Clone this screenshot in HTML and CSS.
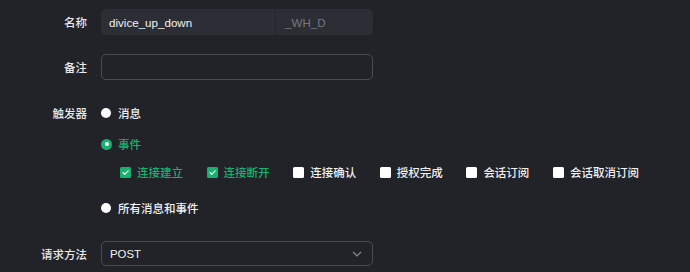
FILE: index.html
```html
<!DOCTYPE html>
<html lang="zh">
<head>
<meta charset="utf-8">
<link rel="stylesheet" href="styles.css">
</head>
<body>
<form class="form">
  <div class="row row-name">
    <label class="label">名称</label>
    <div class="input-group">
      <span class="input-main">divice_up_down</span>
      <span class="input-suffix">_WH_D</span>
    </div>
  </div>
  <div class="row row-remark">
    <label class="label">备注</label>
    <div class="input-outline"></div>
  </div>
  <div class="row row-trigger">
    <label class="label label-top">触发器</label>
    <div class="options">
      <div class="opt opt-1"><span class="radio"></span><span class="opt-text">消息</span></div>
      <div class="opt opt-2 active"><span class="radio checked"></span><span class="opt-text">事件</span></div>
      <div class="checks">
        <div class="check active"><span class="box checked"><svg viewBox="0 0 11 11" width="11" height="11"><path d="M3 5.6 L4.8 7.3 L8.1 3.8" fill="none" stroke="#fff" stroke-width="1.2" stroke-linecap="round" stroke-linejoin="round"/></svg></span><span>连接建立</span></div>
        <div class="check active"><span class="box checked"><svg viewBox="0 0 11 11" width="11" height="11"><path d="M3 5.6 L4.8 7.3 L8.1 3.8" fill="none" stroke="#fff" stroke-width="1.2" stroke-linecap="round" stroke-linejoin="round"/></svg></span><span>连接断开</span></div>
        <div class="check"><span class="box"></span><span>连接确认</span></div>
        <div class="check"><span class="box"></span><span>授权完成</span></div>
        <div class="check"><span class="box"></span><span>会话订阅</span></div>
        <div class="check"><span class="box"></span><span>会话取消订阅</span></div>
      </div>
      <div class="opt opt-3"><span class="radio"></span><span class="opt-text">所有消息和事件</span></div>
    </div>
  </div>
  <div class="row row-method">
    <label class="label">请求方法</label>
    <div class="select">
      <span class="select-value">POST</span>
      <svg class="chevron" viewBox="0 0 10 6" width="10" height="6"><path d="M1 1 L5 5 L9 1" fill="none" stroke="#8a8c90" stroke-width="1.1"/></svg>
    </div>
  </div>
</form>
</body>
</html>
```
FILE: styles.css
```css
* { box-sizing: border-box; }
html, body {
  margin: 0;
  padding: 0;
  background: #222328;
  width: 690px;
  height: 272px;
  overflow: hidden;
}
body {
  font-family: "Liberation Sans", "Noto Sans CJK SC", sans-serif;
  color: #e6e6e8;
  font-size: 12px;
}
.form {
  display: flex;
  flex-direction: column;
}
.row {
  display: flex;
  align-items: center;
}
.label {
  width: 88px;
  text-align: right;
  padding-right: 1px;
  margin-right: 13px;
  font-family: "Noto Sans CJK SC", sans-serif;
  font-size: 11.5px;
  font-weight: 500;
  color: #e8e8ea;
  flex-shrink: 0;
}
.row-name { margin-top: 9px; height: 26px; }
.input-group {
  display: flex;
  width: 272px;
  height: 26px;
  background: #2b2e34;
  border-radius: 5px;
  overflow: hidden;
}
.input-main {
  width: 175px;
  padding-left: 8px;
  display: flex;
  align-items: center;
  font-size: 11.6px;
  color: #f2f2f4;
  border-right: 1px solid #24262b;
}
.input-suffix {
  flex: 1;
  padding-left: 9px;
  display: flex;
  align-items: center;
  font-size: 11.6px;
  color: #76787d;
}
.row-remark { margin-top: 19px; height: 26px; }
.input-outline {
  width: 272px;
  height: 26px;
  border: 1px solid #4a4c51;
  border-radius: 5px;
}
.row-trigger {
  margin-top: 23px;
  align-items: flex-start;
}
.label-top { line-height: 20px; }
.options {
  display: flex;
  flex-direction: column;
}
.opt {
  display: flex;
  align-items: center;
  height: 20px;
  font-family: "Noto Sans CJK SC", sans-serif;
  font-size: 11.5px;
  font-weight: 500;
  color: #f0f0f2;
}
.opt-2 { margin-top: 11px; }
.opt-3 { margin-top: 16px; }
.opt.active { color: #17b26f; }
.radio {
  width: 10px;
  height: 10px;
  border-radius: 50%;
  background: #ffffff;
  margin-right: 7px;
  position: relative;
  flex-shrink: 0;
}
.radio.checked {
  background: #17b26f;
  width: 11px;
  height: 11px;
  margin-right: 6px;
}
.radio.checked::after {
  content: "";
  position: absolute;
  left: 3.5px;
  top: 3.5px;
  width: 4px;
  height: 4px;
  border-radius: 50%;
  background: #fff;
}
.checks {
  display: flex;
  margin-top: 8px;
  margin-left: 19px;
  height: 20px;
  align-items: center;
  gap: 23.6px;
}
.check {
  display: flex;
  align-items: center;
  font-family: "Noto Sans CJK SC", sans-serif;
  font-size: 11.5px;
  font-weight: 500;
  color: #f0f0f2;
}
.check.active { color: #17b26f; }
.box {
  width: 11px;
  height: 11px;
  background: #fff;
  border-radius: 1.5px;
  margin-right: 6px;
  display: flex;
  flex-shrink: 0;
}
.box.checked { background: #17b26f; }
.row-method { margin-top: 23px; height: 25px; }
.select {
  width: 272px;
  height: 25px;
  border: 1px solid #4a4c51;
  border-radius: 5px;
  display: flex;
  align-items: center;
  justify-content: space-between;
  padding: 0 10px 0 8px;
}
.select-value {
  font-size: 11.4px;
  color: #f2f2f4;
}
.chevron { display: block; }
```
